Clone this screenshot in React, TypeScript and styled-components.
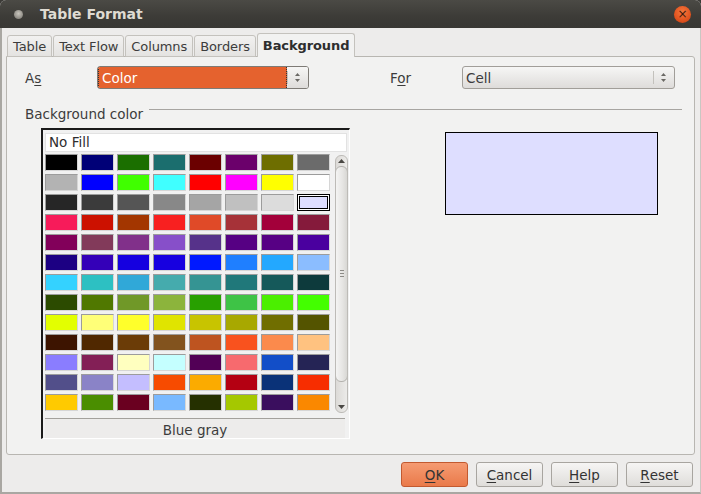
import React from "react";
import styled, { createGlobalStyle } from "styled-components";

const GlobalStyle = createGlobalStyle`
  html, body {
    margin: 0;
    padding: 0;
    background: #3c3b37;
  }
  body {
    font-family: "DejaVu Sans", "Liberation Sans", sans-serif;
    font-size: 13px;
    color: #3c3c3c;
  }
`;

const Window = styled.div`
  width: 701px;
  height: 494px;
  display: flex;
  flex-direction: column;
  background: #edeceb;
  border-radius: 6px 6px 0 0;
  overflow: hidden;
  box-sizing: border-box;
`;

const TitleBar = styled.div`
  height: 28px;
  flex: none;
  display: flex;
  align-items: center;
  padding: 0 10px 0 14px;
  background: linear-gradient(180deg, #4b4a45 0%, #3c3b37 60%, #393834 100%);
  color: #dfdbd2;
  font-weight: bold;
  font-size: 14px;
`;

const Dot = styled.span`
  width: 9px;
  height: 9px;
  border-radius: 50%;
  background: radial-gradient(circle at 50% 40%, #c8c5bd 0%, #8d8a83 70%, #5d5b56 100%);
  margin-right: 17px;
`;

const Title = styled.div`
  flex: 1;
`;

const CloseBtn = styled.div`
  width: 17px;
  height: 17px;
  border-radius: 50%;
  background: radial-gradient(circle at 50% 35%, #f5783e 0%, #e1531f 60%, #c23d12 100%);
  display: flex;
  align-items: center;
  justify-content: center;
  color: #3b1a0c;
  font-size: 12px;
  font-weight: normal;
  line-height: 1;
`;

const Body = styled.div`
  flex: 1;
  display: flex;
  flex-direction: column;
  padding: 5px 5px 0 4px;
  border-left: 2px solid #a9a7a2;
  border-right: 1px solid #c9c7c2;
  border-bottom: 2px solid #a9a7a2;
  box-sizing: border-box;
`;

const Tabs = styled.div`
  display: flex;
  align-items: flex-end;
  height: 24px;
  padding-left: 1px;
  position: relative;
  z-index: 1;
`;

const Tab = styled.div<{ $active?: boolean }>`
  height: ${(p) => (p.$active ? "24px" : "22px")};
  display: flex;
  align-items: center;
  padding: 0 5px;
  margin-right: 1px;
  box-sizing: border-box;
  border: 1px solid #c4c2bd;
  border-bottom: ${(p) => (p.$active ? "none" : "1px solid #c4c2bd")};
  border-radius: 3px 3px 0 0;
  background: ${(p) =>
    p.$active ? "#f2f2f1" : "linear-gradient(180deg, #f2f1f0 0%, #e4e3e1 100%)"};
  font-weight: ${(p) => (p.$active ? "bold" : "normal")};
  color: ${(p) => (p.$active ? "#2e2e2e" : "#3c3c3c")};
  font-size: 13px;
  letter-spacing: -0.1px;
`;

const Panel = styled.div`
  width: 689px;
  height: 399px;
  margin-top: -1px;
  box-sizing: border-box;
  border: 1px solid #b8b6b1;
  border-radius: 0 3px 3px 3px;
  background: #f2f2f1;
  padding: 9px 0 0 18px;
  display: flex;
  flex-direction: column;
`;

const FormRow = styled.div`
  display: grid;
  grid-template-columns: 72px 212px 81px 72px 213px;
  align-items: center;
  height: 23px;
`;

const Label = styled.div`
  font-size: 13.5px;
  u {
    text-decoration: underline;
    text-underline-offset: 2px;
  }
`;

const Select = styled.div<{ $focused?: boolean }>`
  height: 23px;
  box-sizing: border-box;
  display: flex;
  border: 1px solid ${(p) => (p.$focused ? "#7e7b76" : "#a19e99")};
  border-radius: 3px;
  overflow: hidden;
  background: ${(p) =>
    p.$focused ? "#fbfaf9" : "linear-gradient(180deg, #f6f6f5 0%, #dedcda 100%)"};
`;

const SelectValue = styled.div<{ $focused?: boolean }>`
  flex: 1;
  display: flex;
  align-items: center;
  padding-left: 3px;
  font-size: 13.5px;
  background: ${(p) => (p.$focused ? "#e5622e" : "transparent")};
  color: ${(p) => (p.$focused ? "#ffffff" : "#3c3c3c")};
  border-right: ${(p) => (p.$focused ? "1px dotted #333" : "none")};
  border-left: ${(p) => (p.$focused ? "1px dotted #333" : "none")};
`;

const Spin = styled.div<{ $focused?: boolean }>`
  width: 21px;
  display: flex;
  align-items: center;
  justify-content: center;
  background: ${(p) =>
    p.$focused ? "linear-gradient(180deg, #f6f6f5 0%, #dedcda 100%)" : "transparent"};
  position: relative;
  &::before {
    content: "";
    position: absolute;
    left: 0;
    top: 4px;
    bottom: 4px;
    border-left: 1px solid #c3c1bc;
  }
`;

const Section = styled.div`
  display: flex;
  align-items: center;
  margin-top: 16px;
  height: 17px;
  font-size: 13.5px;
  padding-right: 12px;
  &::after {
    content: "";
    flex: 1;
    height: 1px;
    background: #a7a5a1;
    margin-left: 6px;
    margin-bottom: 8px;
  }
`;

const Content = styled.div`
  display: flex;
  align-items: flex-start;
  padding-left: 16px;
  margin-top: 6px;
`;

const ColorList = styled.div`
  width: 309px;
  height: 311px;
  box-sizing: border-box;
  border-top: 2px solid #1a1a1a;
  border-left: 2px solid #1a1a1a;
  border-right: 1px solid #ffffff;
  border-bottom: 1px solid #ffffff;
  background: #f1f1f1;
  display: flex;
  flex-direction: column;
  padding: 3px 0 0 2px;
`;

const NoFill = styled.div`
  width: 302px;
  height: 19px;
  box-sizing: border-box;
  background: #ffffff;
  border: 1px solid #e2e2e2;
  padding-left: 3px;
  display: flex;
  align-items: center;
  font-size: 13.5px;
  color: #2e2e2e;
`;

const GridArea = styled.div`
  display: flex;
  margin-top: 2px;
  height: 261px;
`;

const Swatches = styled.div`
  display: grid;
  grid-template-columns: repeat(8, 33px);
  grid-auto-rows: 17px;
  gap: 3px;
`;

const Swatch = styled.div<{ $color: string; $selected?: boolean }>`
  box-sizing: border-box;
  background: ${(p) => p.$color};
  border: 1px solid;
  border-color: #9c9c9c #d6d6d6 #d6d6d6 #9c9c9c;
  ${(p) =>
    p.$selected &&
    `
    border: 1px solid #000;
    box-shadow: inset 0 0 0 1px #fff, inset 0 0 0 2px #000;
  `}
`;

const ScrollBar = styled.div`
  width: 13px;
  height: 258px;
  margin: 1px 0 0 5px;
  box-sizing: border-box;
  border: 1px solid #bdbbb7;
  border-radius: 6px;
  background: linear-gradient(90deg, #dcdad7 0%, #ecebe9 100%);
  display: flex;
  flex-direction: column;
  align-items: stretch;
  overflow: hidden;
`;

const Arrow = styled.div`
  height: 10px;
  flex: none;
  display: flex;
  align-items: center;
  justify-content: center;
`;

const Thumb = styled.div`
  height: 216px;
  flex: none;
  box-sizing: border-box;
  border: 1px solid #b3b1ad;
  border-radius: 6px;
  margin: 0 -1px;
  background: linear-gradient(90deg, #f4f4f3 0%, #e6e5e3 60%, #d8d7d4 100%);
  display: flex;
  align-items: center;
  justify-content: center;
`;

const Grip = styled.div`
  width: 4px;
  height: 7px;
  background: repeating-linear-gradient(180deg, #8d8b87 0 1px, transparent 1px 3px);
`;

const NameBar = styled.div`
  margin-top: 5px;
  width: 300px;
  border-top: 1px solid #a3a19d;
  height: 20px;
  background: #edeceb;
  display: flex;
  align-items: center;
  justify-content: center;
  font-size: 13.5px;
  color: #3c3c3c;
  padding-top: 2px;
  box-sizing: border-box;
`;

const Preview = styled.div<{ $color: string }>`
  width: 213px;
  height: 83px;
  box-sizing: border-box;
  margin: 4px 0 0 95px;
  border: 1px solid #000;
  background: ${(p) => p.$color};
`;

const Buttons = styled.div`
  display: flex;
  justify-content: flex-end;
  gap: 8px;
  margin-top: 7px;
  padding-right: 2px;
`;

const Button = styled.div<{ $primary?: boolean }>`
  width: 67px;
  height: 25px;
  box-sizing: border-box;
  border-radius: 3px;
  display: flex;
  align-items: center;
  justify-content: center;
  font-size: 13.5px;
  color: #333;
  border: 1px solid ${(p) => (p.$primary ? "#c25a30" : "#a8a5a0")};
  background: ${(p) =>
    p.$primary
      ? "linear-gradient(180deg, #f59b72 0%, #ea7a4a 100%)"
      : "linear-gradient(180deg, #f6f5f4 0%, #dfddda 100%)"};
  u {
    text-decoration: underline;
    text-underline-offset: 2px;
  }
`;

const SpinIcon = () => (
  <svg width="7" height="11" viewBox="0 0 7 11">
    <path d="M3.5 1 L6 4 L1 4 Z" fill="#6a6864" />
    <path d="M3.5 10 L6 7 L1 7 Z" fill="#6a6864" />
  </svg>
);

const palette = [
  ["#000000", "#000077", "#1b6f00", "#1b6e6e", "#6b0000", "#6b006b", "#6e6e00", "#6b6b6b"],
  ["#b3b3b3", "#0000ff", "#40ff00", "#40ffff", "#ff0000", "#ff00ff", "#ffff00", "#ffffff"],
  ["#262626", "#3b3b3b", "#555555", "#888888", "#a5a5a5", "#c0c0c0", "#dcdcdc", "#dedeff"],
  ["#f71b5a", "#cc1100", "#a33600", "#f82020", "#e04a28", "#a63238", "#a3003a", "#851a3b"],
  ["#82005a", "#823a5a", "#81308a", "#874fc9", "#56328a", "#560083", "#570084", "#4a009f"],
  ["#1c0083", "#3400b8", "#1500e0", "#1700e0", "#0019ff", "#1f7fff", "#23a8ff", "#8bbdff"],
  ["#34d2ff", "#2dc0c2", "#30a8d8", "#45abad", "#359493", "#20787a", "#15595a", "#0d3a3c"],
  ["#2c4b00", "#507800", "#709828", "#8cb43c", "#28a000", "#3ec346", "#4bef00", "#43ff00"],
  ["#e3ff00", "#ffff78", "#ffff2b", "#e0e400", "#c8c400", "#a8a800", "#706e00", "#545400"],
  ["#3d1400", "#502800", "#6b3c07", "#82531e", "#be5420", "#f9521e", "#fb8a4c", "#ffc280"],
  ["#8a7dff", "#831f56", "#ffffbf", "#c5ffff", "#520056", "#f76a6e", "#124ec8", "#252455"],
  ["#524f8a", "#8a83c7", "#c4beff", "#f74b00", "#fbab00", "#b40012", "#0a3278", "#f72d00"],
  ["#ffca00", "#4a8e00", "#6a0020", "#79b9ff", "#253000", "#a5c800", "#3a0e5e", "#fa8800"],
];

const App = () => {
  const selected = "#dedeff";
  return (
    <>
      <GlobalStyle />
      <Window>
        <TitleBar>
          <Dot />
          <Title>Table Format</Title>
          <CloseBtn>×</CloseBtn>
        </TitleBar>
        <Body>
          <Tabs>
            <Tab>Table</Tab>
            <Tab>Text Flow</Tab>
            <Tab>Columns</Tab>
            <Tab>Borders</Tab>
            <Tab $active>Background</Tab>
          </Tabs>
          <Panel>
            <FormRow>
              <Label>
                A<u>s</u>
              </Label>
              <Select $focused>
                <SelectValue $focused>Color</SelectValue>
                <Spin $focused>
                  <SpinIcon />
                </Spin>
              </Select>
              <div />
              <Label>
                F<u>o</u>r
              </Label>
              <Select>
                <SelectValue>Cell</SelectValue>
                <Spin>
                  <SpinIcon />
                </Spin>
              </Select>
            </FormRow>
            <Section>Background color</Section>
            <Content>
              <ColorList>
                <NoFill>No Fill</NoFill>
                <GridArea>
                  <Swatches>
                    {palette.flat().map((c, i) => (
                      <Swatch key={i} $color={c} $selected={i === 23} />
                    ))}
                  </Swatches>
                  <ScrollBar>
                    <Arrow>
                      <svg width="7" height="4" viewBox="0 0 7 4">
                        <path d="M3.5 0 L7 4 L0 4 Z" fill="#4a4844" />
                      </svg>
                    </Arrow>
                    <Thumb>
                      <Grip />
                    </Thumb>
                    <div style={{ flex: 1 }} />
                    <Arrow>
                      <svg width="7" height="4" viewBox="0 0 7 4">
                        <path d="M0 0 L7 0 L3.5 4 Z" fill="#4a4844" />
                      </svg>
                    </Arrow>
                  </ScrollBar>
                </GridArea>
                <NameBar>Blue gray</NameBar>
              </ColorList>
              <Preview $color={selected} />
            </Content>
          </Panel>
          <Buttons>
            <Button $primary>
              <u>O</u>K
            </Button>
            <Button>
              <u>C</u>ancel
            </Button>
            <Button>
              <u>H</u>elp
            </Button>
            <Button>
              <u>R</u>eset
            </Button>
          </Buttons>
        </Body>
      </Window>
    </>
  );
};

export default App;
